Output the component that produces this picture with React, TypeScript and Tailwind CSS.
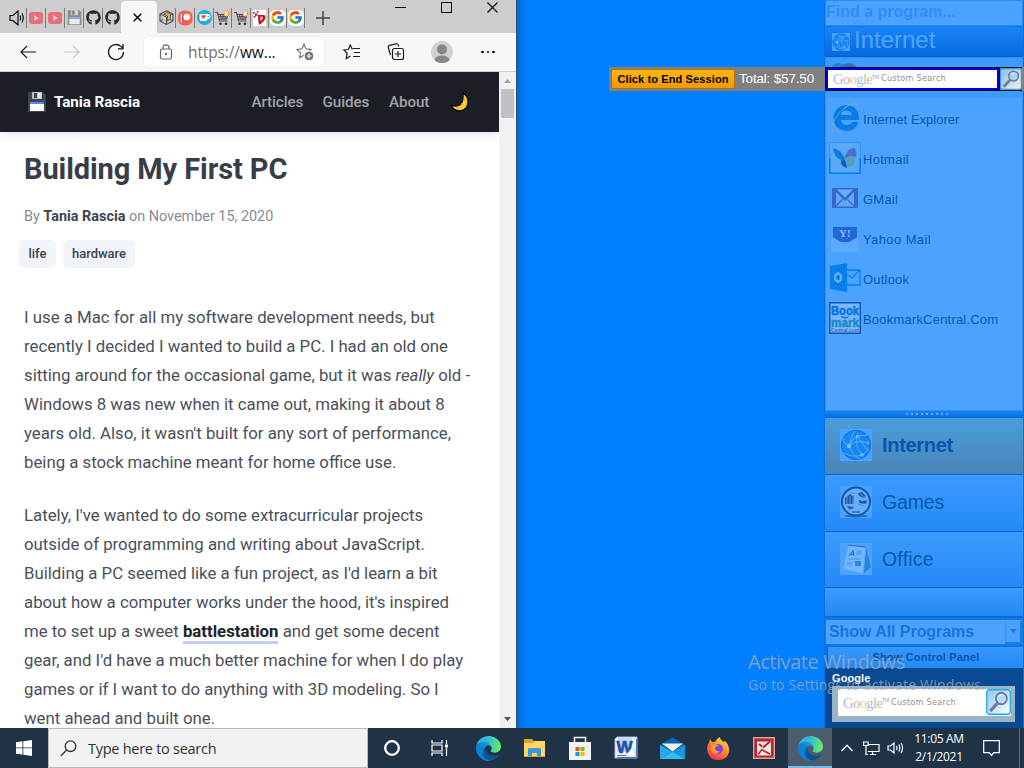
import React from "react";
import { FaGithub } from "react-icons/fa";
import { FcGoogle } from "react-icons/fc";

type Kids = { children?: React.ReactNode };

const Stroke = ({ w = 16, h = 16, sw = 1.2, className = "", children }: { w?: number; h?: number; sw?: number; className?: string } & Kids) => (
  <svg width={w} height={h} viewBox={`0 0 ${w} ${h}`} fill="none" stroke="currentColor" strokeWidth={sw} className={`shrink-0 ${className}`}>
    {children}
  </svg>
);

const YouTube = () => (
  <svg width="14" height="14" viewBox="0 0 14 14">
    <rect x="0" y="1" width="14" height="12" rx="3" fill="#e57078" />
    <path d="M5.3 4.2v5.6L10 7z" fill="#ecd5d7" />
  </svg>
);

const Floppy = ({ size = 16, faded = false }: { size?: number; faded?: boolean }) => (
  <svg width={size} height={size} viewBox="0 0 18 20" opacity={faded ? 0.6 : 1} className="shrink-0">
    <path d="M1 0h14l3 3v17H0V1z" fill={faded ? "#55606c" : "#3d4650"} />
    <path d="M4 0h10v7H4z" fill="#b6bec4" />
    <path d="M6 1h3v5H6z" fill="#3d4650" />
    <path d="M10 1h3v5h-3z" fill="#e5e9ec" />
    <path d="M2 10h14v9H2z" fill="#fff" />
    <path d="M2 10h14v2H2z" fill="#6b7df0" />
  </svg>
);

const BoxIcon = () => (
  <svg width="15" height="15" viewBox="0 0 15 15">
    <path d="M7.500 .8 14 4v7l-6.500 3.400L1 11V4z" fill="#c9cbd0" stroke="#454b5a" strokeWidth="1.100" />
    <path d="M1 4l6.500 3.200L14 4M7.500 7.200v7M1 11l3-1.500M14 11l-3-1.500" fill="none" stroke="#454b5a" />
    <path d="M4.500 4 8.500 2.500 11.500 4v5L8.500 11V6z" fill="#f4b32a" stroke="#343a4a" strokeWidth=".7" />
  </svg>
);

const Patreon = () => (
  <svg width="15" height="16" viewBox="0 0 15 16">
    <rect y=".5" width="14.500" height="15" rx="6" fill="#ff5f4b" />
    <rect x="3" y="4" width="2" height="8" fill="#3a2040" />
    <circle cx="8.800" cy="7" r="3.300" fill="#fff" />
    <rect x="2.800" y="4" width="1.500" height="8" fill="#fff" />
  </svg>
);

const Kofi = () => (
  <svg width="15" height="15" viewBox="0 0 15 15">
    <circle cx="7.500" cy="7.500" r="7.500" fill="#22aae5" />
    <path d="M2.500 4h8q3 0 3 2.400T10.500 9q-.6 2-2 2h-4q-2 0-2-2z" fill="#fff" />
    <path d="M6.500 9 4.200 6.800Q4 5 5.300 5q.8 0 1.200.7Q7 5 7.800 5 9 5.200 8.700 6.800z" fill="#ff4a45" />
    <path d="M10.700 5.400q1.500 0 1.300 1.100t-1.300 1z" fill="#22aae5" />
  </svg>
);

const Cart = () => (
  <svg width="15" height="16" viewBox="0 0 15 16">
    <path d="M0 2.500h2.500l2 8.500h8M3 4.500h10l-1.500 4.700H4.200M5.500 4.500l.8 4.500M8 4.500v4.700M10.500 4.500 10 9M3.500 6.800h9" fill="none" stroke="#4a4a4a" strokeWidth="1.100" />
    <circle cx="5.500" cy="13.800" r="1.300" fill="#333" />
    <circle cx="11" cy="13.800" r="1.300" fill="#333" />
    <path d="M9.500.5h4L15 4l-1.500 2.500h-3L8.500 4z" fill="#f59a4b" />
    <path d="M10.500 1v4.500M10.800 3.400l2-1.700M10.800 3.400l2 2" stroke="#fff" strokeWidth="1.200" fill="none" />
  </svg>
);

const RedV = () => (
  <svg width="13" height="16" viewBox="0 0 13 16">
    <path d="M0 0h13v16H0z" fill="#fff" />
    <path d="M5 5h5.500q2.500 0 1.900 3-.7 3.500-6.400 7-.9-3.500-1-10z" fill="#ca1119" />
    <path d="M7.300 6.800h2.500q-.2 3-2 4.800z" fill="#fff" />
    <path d="M0 2h1.800v1.600H0zM2 3.600h2.500v2.200H2zM.5 6h2v1.500h-2zM3.800 1h1.700v1.700H3.800z" fill="#ca1119" />
  </svg>
);

const GoogleTab = () => (
  <div className="flex h-4 w-4 shrink-0 items-center justify-center rounded-[5px] bg-white/90">
    <FcGoogle size={15} />
  </div>
);

const Tab = ({ children, className = "w-[19px]" }: { className?: string } & Kids) => (
  <div className={`flex h-[20px] shrink-0 items-center justify-center border-r border-[#7b7b7b] ${className}`}>{children}</div>
);

const StarPath = "M8 1.200l2.100 4.700 5 .5-3.800 3.400 1.100 5L8 12.200l-4.400 2.600 1.100-5L.9 6.400l5-.5z";

const Chrome = () => (
  <>
    <div className="flex h-[33px] bg-[#cdcdcd]">
      <div className="flex h-[35px] items-center">
        <Tab className="w-[27px] pl-[7px]">
          <Stroke w={16} h={16} sw={1.100} className="text-black">
            <path d="M1 5.500h3l5-4.500v14l-5-4.500H1zM11 5.500q1.200 2.500 0 5M13 3.500q2.500 4.500 0 9" />
          </Stroke>
        </Tab>
        <Tab><YouTube /></Tab>
        <Tab><YouTube /></Tab>
        <Tab><Floppy size={15} faded /></Tab>
        <Tab><FaGithub size={15} color="#24292e" /></Tab>
        <div className="flex h-[20px] w-[18px] items-center justify-center"><FaGithub size={15} color="#24292e" /></div>
      </div>
      <div className="mt-px flex w-[36px] items-center justify-center rounded-t-[4px] bg-[#f7f7f7] pr-[3px]">
        <Stroke w={9} h={9} sw={1.400} className="text-black"><path d="M.7.7l7.600 7.600M8.300.7.7 8.300" /></Stroke>
      </div>
      <div className="flex h-[35px] items-center">
        <Tab><BoxIcon /></Tab>
        <Tab><Patreon /></Tab>
        <Tab><Kofi /></Tab>
        <Tab className="w-[18px]"><Cart /></Tab>
        <Tab><Cart /></Tab>
        <Tab className="w-[18px]"><RedV /></Tab>
        <Tab className="w-[18px]"><GoogleTab /></Tab>
        <Tab className="w-[18px]"><GoogleTab /></Tab>
        <Stroke w={14} h={14} sw={1.500} className="ml-[11px] text-[#444]"><path d="M7 0v14M0 7h14" /></Stroke>
      </div>
      <div className="ml-auto flex h-[14px] items-center gap-[35px] pr-[18px] text-black">
        <Stroke w={11} h={11} sw={1}><path d="M0 5.500h11" /></Stroke>
        <Stroke w={11} h={11} sw={1}><path d="M.5.500h10v10H.5z" /></Stroke>
        <Stroke w={11} h={11} sw={1.100}><path d="M.5.500l10 10M10.500.500l-10 10" /></Stroke>
      </div>
    </div>
    <div className="flex h-[39px] items-center border-b border-[#cfcfcf] bg-[#f7f7f7] pl-[6px] text-[#1b1b1b]">
      <div className="flex w-11 justify-center"><Stroke w={16} h={14}><path d="M16 7H1M7 1 1 7l6 6" /></Stroke></div>
      <div className="flex w-11 justify-center text-[#c9c9c9]"><Stroke w={16} h={14}><path d="M0 7h15M9 1l6 6-6 6" /></Stroke></div>
      <div className="flex w-11 justify-center"><Stroke w={18} h={18} sw={1.300}><path d="M16.500 9a7.500 7.500 0 1 1-2.300-5.400L16 5.500M16 1v4.800h-5" /></Stroke></div>
      <div className="ml-[6px] flex h-[30px] w-[180px] shrink-0 items-center rounded-[4px] bg-white pl-[15px] shadow-[0_0_3px_#e2e2e2]">
        <Stroke w={14} h={16} className="text-[#666]">
          <rect x="1.500" y="5" width="11" height="10" rx="1.500" />
          <path d="M4 5V3.800a3 3 0 0 1 6 0V5" /><circle cx="7" cy="10" r=".6" fill="currentColor" />
        </Stroke>
        <span className="mt-px ml-[15px] w-[90px] whitespace-nowrap font-['Open_Sans',sans-serif] text-[15.500px] tracking-[-0.120px] text-[#707070]">
          https://<span className="text-[#111]">ww...</span>
        </span>
        <Stroke w={18} h={18} className="ml-[18px] text-[#777]">
          <path d={StarPath} /><circle cx="13" cy="13" r="4.800" fill="#707070" stroke="#fff" strokeWidth="1" />
          <path d="M13 10.500v5M10.500 13h5" stroke="#fff" />
        </Stroke>
      </div>
      <div className="ml-[5px] flex w-11 justify-center">
        <Stroke w={17} h={16}><path d="M9.300 5.500 7.300 1 5.300 5.500.8 6l3.400 3.200-1 5.300 4.300-2.500M9.800 4.500H17M11 8.500h6M10 12.500h7" /></Stroke>
      </div>
      <div className="ml-px flex w-11 justify-center">
        <Stroke w={18} h={18}>
          <path d="M3.500 12 1.300 4.500Q1 2.700 2.700 2.300L9 .8q1.800-.3 2.200 1.200l.5 1.500" />
          <rect x="5.500" y="5.500" width="11" height="11" rx="2" /><path d="M11 8v6M8 11h6" />
        </Stroke>
      </div>
      <div className="ml-[2px] flex w-11 justify-center">
        <svg width="22" height="22" viewBox="0 0 22 22">
          <circle cx="11" cy="11" r="11" fill="#d2d0ce" />
          <circle cx="11" cy="8.500" r="5" fill="#8a8583" />
          <path d="M3.300 19q1.700-4.500 7.700-4.500t7.700 4.500A11 11 0 0 1 3.300 19z" fill="#8a8583" />
        </svg>
      </div>
      <div className="ml-[2px] flex w-11 justify-center gap-[3px]">
        <i className="h-[2.500px] w-[2.500px] rounded-full bg-black" /><i className="h-[2.500px] w-[2.500px] rounded-full bg-black" /><i className="h-[2.500px] w-[2.500px] rounded-full bg-black" />
      </div>
    </div>
  </>
);

const Moon = () => (
  <svg width="20" height="20" viewBox="0 0 20 20">
    <path d="M12.800 1q5.700 3.500 5.200 9.500-.8 7.500-8 8.300-5.800.2-9-5.200 8 1.700 10.800-3Q13.700 6.500 12.800 1z" fill="#ffc83d" stroke="#0b0b0d" strokeWidth="1.300" />
    <circle cx="12" cy="12" r="1" fill="#e69a12" /><circle cx="14.500" cy="8" r=".7" fill="#e69a12" /><circle cx="8" cy="15.500" r=".8" fill="#e69a12" />
  </svg>
);

const Article = () => (
  <div className="flex h-[656px] font-[Roboto,sans-serif]">
    <div className="w-[499px] shrink-0 overflow-hidden bg-white">
      <div className="flex h-[60px] items-center bg-[#1c1e26] pl-[27px] font-medium text-[#a0a2a6] shadow-[0_3px_10px_rgba(50,50,93,0.12)]">
        <Floppy size={20} />
        <span className="ml-[7px] w-[197.500px] whitespace-nowrap text-[15.200px] font-bold tracking-[-0.050px] text-white">Tania Rascia</span>
        <span className="pt-px w-[71px] text-[15.200px] tracking-[-0.100px]">Articles</span>
        <span className="pt-px w-[66.500px] text-[15.200px] tracking-[-0.050px]">Guides</span>
        <span className="pt-px w-[60.500px] text-[15.200px] tracking-[-0.100px]">About</span>
        <Moon />
      </div>
      <h1 className="mt-[17px] ml-6 text-[29px] leading-10 font-bold tracking-[-0.090px] whitespace-nowrap text-[#373d49]">Building My First PC</h1>
      <p className="mt-[18px] ml-6 text-[14.400px] leading-5 text-[#868b93]">By <b className="font-bold text-[#3e4450]">Tania Rascia</b> on November 15, 2020</p>
      <div className="mt-[13px] ml-[19px] flex gap-[7px] text-[13px] font-medium text-[#3c434f]">
        <span className="flex h-7 w-[37px] items-center justify-center rounded-[5px] bg-[#f1f4f9]">life</span>
        <span className="flex h-7 w-[72px] items-center justify-center rounded-[5px] bg-[#f1f4f9]">hardware</span>
      </div>
      <div className="mt-[35px] ml-6 text-[16.800px] leading-[29px] whitespace-nowrap text-[#4a4f5a]">
        <p>
          I use a Mac for all my software development needs, but<br />
          recently I decided I wanted to build a PC. I had an old one<br />
          sitting around for the occasional game, but it was <em>really</em> old -<br />
          Windows 8 was new when it came out, making it about 8<br />
          years old. Also, it wasn't built for any sort of performance,<br />
          being a stock machine meant for home office use.
        </p>
        <p className="mt-6">
          Lately, I've wanted to do some extracurricular projects<br />
          outside of programming and writing about JavaScript.<br />
          Building a PC seemed like a fun project, as I'd learn a bit<br />
          about how a computer works under the hood, it's inspired<br />
          me to set up a sweet <b className="border-b-[3px] border-[#c5cdf5] font-bold text-[#20242c]">battlestation</b> and get some decent<br />
          gear, and I'd have a much better machine for when I do play<br />
          games or if I want to do anything with 3D modeling. So I<br />
          went ahead and built one.
        </p>
      </div>
    </div>
    <div className="flex w-[17px] flex-col items-center bg-[#f1f1f1]">
      <svg width="17" height="17" viewBox="0 0 17 17"><path d="M5 11h7L8.500 7z" fill="#a3a3a3" /></svg>
      <div className="h-[29px] w-[13px] bg-[#c1c1c1]" />
      <svg width="17" height="17" viewBox="0 0 17 17" className="mt-auto"><path d="M5 6h7l-3.500 4z" fill="#505050" /></svg>
    </div>
  </div>
);

const Globe = ({ size }: { size: number }) => (
  <svg width={size} height={size} viewBox="0 0 32 32" className="shrink-0">
    <path d="M0 0h32v32H0z" fill="#4ba3ff" />
    <circle cx="16" cy="16" r="15" fill="#1686f5" />
    <circle cx="16" cy="16" r="14.500" fill="none" stroke="#0c72df" />
    <g fill="none" stroke="#5cabff" strokeWidth="1">
      <path d="M9 17Q13 6 27 6M9 17Q2 13 3 9M9 17q3 9 11 13M9 17q7-7 20-3M17 7q-3 8 5 19M4 24q9 5 18 2l7-6M9 17 14 2M17 7l11 15" />
    </g>
    <g fill="#7abcff"><circle cx="9" cy="17" r="2.200" /><circle cx="22" cy="26" r="1.800" /><circle cx="17.500" cy="7" r="1.500" /><circle cx="28" cy="14" r="1.300" /></g>
  </svg>
);

const IE = () => (
  <svg width="32" height="32" viewBox="0 0 32 32">
    <path d="M30 18H12q.5 5 6 5 4 0 5-3h6.500q-2.500 9-12 9Q5 28 4.500 16 5.500 4 17.500 3 30 3.500 30 18zM12 13h11q-.5-4.500-5.500-4.500T12 13z" fill="#087be8" />
    <path d="M27 8Q30 2.500 26 2.500 17 3 9 13 1 25 5 27.500q2 1 7-1.500-7 5-9 3Q0 24 9 12 19 .5 26 1q5 .5 1 7z" fill="#6dabc4" />
  </svg>
);
const Hotmail = () => (
  <svg width="32" height="32" viewBox="0 0 32 32">
    <path d="M.5.5h31v31H.5z" fill="#57a8f8" stroke="#3591ef" /><path d="M.8 16v15.200h30.400V16" fill="none" stroke="#087ceb" strokeWidth="1.600" />
    <path d="M16 18Q13 8 4 6q1 9 8 12-1 4 5 8z" fill="#087ed8" />
    <path d="M15 18Q18 5 26 6q4 10-4 13z" fill="#4c70c9" />
    <path d="M15 18q5-6 11-3 1 11-7 10z" fill="#579fba" /><path d="M15 17q3 4 3 9-6-2-6-6z" fill="#155bba" />
  </svg>
);
const Gmail = () => (
  <svg width="32" height="32" viewBox="0 0 32 32">
    <path d="M3 6h26v20H3z" fill="#3767cb" /><path d="M8 7.500h16l-8 8z" fill="#67adf8" /><path d="M7 10v14.500h18V10l-9 9z" fill="#5da9fb" />
    <path d="M7 24l7-7M25 24l-7-7" stroke="#3b6fd2" strokeWidth="1.500" />
  </svg>
);
const Yahoo = () => (
  <svg width="32" height="32" viewBox="0 0 32 32">
    <path d="M2 10h28v20H2z" fill="#50a2f4" />
    <path d="M4 5h24v10l-8 5h-8l-8-5z" fill="#2464dc" /><path d="M2 15l14 8 14-8v15H2z" fill="#5baafb" />
    <text x="10" y="15" fontSize="11" fontWeight="700" fontFamily="Liberation Serif" fill="#8abfff">Y!</text>
  </svg>
);
const Outlook = () => (
  <svg width="32" height="32" viewBox="0 0 32 32">
    <path d="M17 8h14v15H17M17 12l6 4 8-8" fill="none" stroke="#087eed" strokeWidth="1.300" />
    <path d="M1 4l17-3v29L1 27z" fill="#087eed" /><ellipse cx="9" cy="15.500" rx="3" ry="4" fill="none" stroke="#65b1ff" strokeWidth="2.300" />
  </svg>
);
const Bookmark = () => (
  <svg width="32" height="32" viewBox="0 0 32 32" fontFamily="Liberation Sans" fontWeight="700">
    <path d="M.7.7h30.600v30.600H.7z" fill="#78b7fb" stroke="#0f56b5" strokeWidth="1.500" />
    <text x="2" y="12.500" fontSize="13.500" textLength="28" lengthAdjust="spacingAndGlyphs" stroke="#0873df" strokeWidth=".5" fill="#0873df">Book</text>
    <path d="M12 14.500q4 2.500 8 0" fill="none" stroke="#0873df" strokeWidth="1.300" />
    <text x="2" y="25" fontSize="13" textLength="28" lengthAdjust="spacingAndGlyphs" stroke="#188bc8" strokeWidth=".5" fill="#188bc8">mark</text>
    <text x="2" y="30" fontSize="5" textLength="28" lengthAdjust="spacingAndGlyphs" fill="#5165b8">Central.com</text>
  </svg>
);

const shortcuts: [string, React.ReactNode, string][] = [
  ["Internet Explorer", <IE />, "tracking-[0.020px]"],
  ["Hotmail", <Hotmail />, "tracking-[0.280px]"],
  ["GMail", <Gmail />, "tracking-[0.250px]"],
  ["Yahoo Mail", <Yahoo />, "tracking-[0.400px]"],
  ["Outlook", <Outlook />, "tracking-[0.200px]"],
  ["BookmarkCentral.Com", <Bookmark />, "tracking-[0.200px]"],
];

const GamesIcon = () => (
  <svg width="32" height="32" viewBox="0 0 32 32" className="mb-[2px]">
    <path d="M0 0h32v32H0z" fill="#4ba3ff" /><ellipse cx="16" cy="30" rx="12" ry="1.500" fill="#176fca" />
    <circle cx="16" cy="15.500" r="14" fill="#65aef8" stroke="#0c58ae" strokeWidth="2" />
    <path d="M5 12l5-4 4 3-1 7H5zM18 7l4-1 4 4-2 2-5-2zM19 14l4 1 4-1-1 4-7-1zM7 20l7 1-1 1.500-4 1z" fill="#215bb0" />
    <path d="M7 10v8M10 10v8M13 11v7M20 8l6 4M18 18l7 2M10 6l6 2" stroke="#6589cc" /><path d="M12 25h8v2h-8z" fill="#5373c4" />
  </svg>
);
const OfficeIcon = () => (
  <svg width="32" height="32" viewBox="0 0 32 32" className="mb-[2px]">
    <path d="M0 0h32v32H0z" fill="#4ba3ff" /><path d="M26 4l5 20-8 7z" fill="#2c85d3" />
    <path d="M8 2l18 2-3 27L3 26z" fill="#71b7ff" stroke="#55a5f4" /><path d="M8 2l18 2" stroke="#1a70d0" />
    <path d="M9 13l4-5 1 5M10.500 11.500h3" fill="none" stroke="#1c78df" strokeWidth="1.200" />
    <path d="M16 9h6M16 11h6M8 16h13M7 20h6M7 22h5" stroke="#4796ea" /><path d="M15 18h6v5h-6z" fill="#258ae5" />
  </svg>
);

const Magnifier = ({ w = 24, h = 24 }: { w?: number; h?: number }) => (
  <svg width={w} height={h} viewBox="0 0 24 24" preserveAspectRatio="none" className="shrink-0">
    <defs><linearGradient id="mag" x2="1" y2="1"><stop stopColor="#8fc8f8" /><stop offset=".5" stopColor="#c5e1fa" /><stop offset="1" stopColor="#fff" /></linearGradient></defs>
    <rect x=".7" y=".7" width="22.600" height="22.600" rx="2.500" fill="url(#mag)" stroke="#29a9df" strokeWidth="1.300" />
    <path d="M4 20.500l7-7.500" stroke="#6c7c93" strokeWidth="3" /><circle cx="14.800" cy="8.800" r="5.300" fill="#b5daff" stroke="#687c99" strokeWidth="1.700" />
    <path d="M12 7q2-2 4-1.500" stroke="#eff8ff" fill="none" />
  </svg>
);

const GoogleCustom = () => (
  <span className="flex items-center whitespace-nowrap">
    <span className="w-[39px] font-['Liberation_Serif',serif] text-[14.500px] leading-4 tracking-[-0.550px] text-[#a9bce2]">
      G<span className="text-[#e3aaa5]">o</span><span className="text-[#dccf92]">o</span>g<span className="text-[#a5cba5]">l</span><span className="text-[#e3aaa5]">e</span>
    </span>
    <span className="mb-1 w-[7px] text-[5px] leading-none text-[#999]">TM</span>
    <span className="ml-[2px] font-['DejaVu_Sans_Condensed','DejaVu_Sans',sans-serif] text-[9px] tracking-[0.280px] text-[#909090]">Custom Search</span>
  </span>
);

const Sidebar = () => (
  <div className="flex w-[200px] shrink-0 flex-col border-x border-[#0b6fe0] bg-[#0b76ec] font-['Liberation_Sans',sans-serif]">
    <div className="h-[26px] border border-[#2c8cf3] bg-[#4ba3ff] text-[16px] leading-[22px] font-bold text-[#2c8df4]">Find a program...</div>
    <div className="mt-px flex h-[30px] items-center border-b border-[#075dc4] bg-linear-to-b from-[#1983f6] to-[#066ae0] pl-[7px] text-[24px] leading-6 text-[#51a5ff]">
      <Globe size={18} /><span className="mb-[4px] ml-[4px]">Internet</span>
    </div>
    <div className="h-[354px] shrink-0 border border-[#3390f1] bg-[#4ba3ff]">
      <div className="h-[40px] bg-[#3c9bff] pt-[4px] pl-[4px]">
        <svg width="34" height="16" viewBox="0 0 34 16"><circle cx="8" cy="7" r="6" fill="#1383ed" /><path d="M11 3q12-5 17 4v4H14z" fill="#326ace" /><path d="M3 9q3-6 9-3" stroke="#5ab3ff" fill="none" /></svg>
      </div>
      {shortcuts.map(([name, icon, tracking]) => (
        <div key={name} className="flex h-10 items-center pl-[3px] text-[13px] text-[#0757af]">
          {icon}<span className={`ml-[2px] pt-[3px] ${tracking}`}>{name}</span>
        </div>
      ))}
    </div>
    <div className="flex h-[7px] shrink-0 items-center justify-center gap-[3px] bg-linear-to-b from-[#1983f6] to-[#066ae0] pl-[5px]">
      {Array.from({ length: 9 }, (_, i) => <i key={i} className="mb-[2px] h-[2px] w-[2px] bg-[#63b0ff]" />)}
    </div>
    <div className="flex h-[57px] items-center border-b border-[#0866da] bg-linear-to-b from-[#4a9ddb] to-[#4a85b8] pb-[2px] pl-[15px] text-[20px] font-bold text-[#0757af]">
      <Globe size={32} /><span className="ml-[10px] tracking-[-0.300px]">Internet</span>
    </div>
    <div className="flex h-[57px] items-center border-b border-[#0866da] bg-linear-to-b from-[#3b9bff] to-[#238af6] pl-[15px] text-[19.500px] text-[#0757af]">
      <GamesIcon /><span className="ml-[10px] tracking-[-0.150px]">Games</span>
    </div>
    <div className="flex h-[56px] items-center border-b border-[#0866da] bg-linear-to-b from-[#3b9bff] to-[#238af6] pl-[15px] text-[19.500px] text-[#0757af]">
      <OfficeIcon /><span className="ml-[10px] tracking-[0.200px]">Office</span>
    </div>
    <div className="h-[29px] border-b border-[#0866da] bg-linear-to-b from-[#3b9bff] to-[#238af6]" />
    <div className="mt-[2px] flex h-[26px] items-center justify-between border border-[#197bdf] bg-[#4ba3ff] pl-[3px] text-[16px] font-bold text-[#1875d8]">
      <span className="whitespace-nowrap tracking-[-0.060px]">Show All Programs</span>
      <span className="flex h-[23px] w-[17px] items-center justify-center border-r-2 border-b-2 border-l border-[#1d7ddf] border-l-[#3693f5] bg-[#49a1fd]"><svg width="7" height="4" viewBox="0 0 7 4"><path d="M0 0h7L3.500 4z" fill="#1875d8" /></svg></span>
    </div>
    <div className="mt-[2px] ml-[2px] flex h-[21px] items-center justify-center border-l border-[#0868d8] bg-linear-to-b from-[#3697fc] to-[#238af6] pl-px text-[11px] font-bold tracking-[0.180px] text-[#0757af]">Show Control Panel</div>
    <div className="flex-1 bg-[#084a93] pt-[3px] pl-[7px]">
      <div className="mb-px text-[11px] leading-[14px] font-bold tracking-[0.100px] text-white">Google</div>
      <div className="flex h-[36px] w-[183px] border-[6px] border-t-[3px] border-r-[4px] border-[#98b4c6] bg-white">
        <div className="flex flex-1 items-center pl-[5px]"><GoogleCustom /></div>
        <Magnifier w={25} h={26} />
      </div>
    </div>
  </div>
);

const Edge = ({ id }: { id: string }) => (
  <svg width="25" height="25" viewBox="0 0 256 256">
    <defs>
      <linearGradient id={`${id}a`} x1="63" y1="178" x2="241" y2="178" gradientUnits="userSpaceOnUse"><stop stopColor="#0c59a4" /><stop offset="1" stopColor="#114a8b" /></linearGradient>
      <linearGradient id={`${id}b`} x1="157" y1="85" x2="46" y2="220" gradientUnits="userSpaceOnUse"><stop stopColor="#1b9de2" /><stop offset=".5" stopColor="#0b84d2" /><stop offset="1" stopColor="#0883d9" /></linearGradient>
      <linearGradient id={`${id}c`} x1="10" y1="50" x2="250" y2="110" gradientUnits="userSpaceOnUse"><stop stopColor="#35a9e8" /><stop offset=".5" stopColor="#35c1c8" /><stop offset="1" stopColor="#66eb6e" /></linearGradient>
    </defs>
    <g transform="translate(-4.63 -4.92)">
      <path fill={`url(#${id}a)`} d="M235.680 195.460a93.730 93.730 0 01-10.540 4.710 101.870 101.870 0 01-35.900 6.460c-47.320 0-88.540-32.550-88.540-74.320A31.480 31.480 0 01117.130 105c-42.800 1.800-53.800 46.400-53.800 72.530 0 73.880 68.090 81.370 82.760 81.370 7.910 0 19.840-2.300 27-4.560l1.310-.44a128.340 128.340 0 0066.600-52.800 4 4 0 00-5.320-5.640z" />
      <path fill={`url(#${id}b)`} d="M110.340 246.340A79.200 79.200 0 0187.600 225a80.720 80.720 0 0129.530-120c3.120-1.470 8.450-4.130 15.540-4a32.350 32.350 0 0125.690 13 31.880 31.880 0 016.360 18.660c0-.21 24.460-79.600-80-79.600-43.900 0-80 41.660-80 78.210a130.150 130.150 0 0012.110 56 128 128 0 00156.380 67.110 75.550 75.550 0 01-62.780-8z" />
      <path fill={`url(#${id}c)`} d="M156.940 153.780c-.81 1.050-3.300 2.500-3.300 5.660 0 2.610 1.700 5.120 4.720 7.230 14.380 10 41.490 8.680 41.560 8.680a59.560 59.560 0 0030.270-8.350 61.380 61.380 0 0030.430-52.880c.26-22.410-8-37.310-11.340-43.910C228.090 28.760 182.350 4.920 132.610 4.920a128 128 0 00-128 126.200c.48-36.540 36.800-66.050 80-66.050 3.500 0 23.460.34 42 10.070 16.340 8.580 24.900 18.940 30.850 29.210 6.180 10.670 7.280 24.150 7.280 29.520s-2.740 13.330-7.800 19.910z" />
    </g>
  </svg>
);

const Folder = () => (
  <svg width="23" height="20" viewBox="0 0 23 20"><path d="M1 1h8l2 2h11v16H1z" fill="#e0a316" /><path d="M1 5h9l2-2h10v15H1z" fill="#ffd768" /><path d="M5 18v-7l1-1h11l1 1v7h-4v-3H9v3z" fill="#3c97dc" /></svg>
);
const Store = () => (
  <svg width="24" height="25" viewBox="0 0 24 25"><path d="M6.500 7V1.500h11V7" fill="none" stroke="#f1f1f1" strokeWidth="1.600" /><path d="M1 6h22v18H1z" fill="#f1f1f1" /><path d="M7.500 11h4v4h-4z" fill="#f25022" /><path d="M12.500 11h4v4h-4z" fill="#7fba00" /><path d="M7.500 16h4v4h-4z" fill="#00a4ef" /><path d="M12.500 16h4v4h-4z" fill="#ffb900" /></svg>
);
const Word = () => (
  <svg width="24" height="24" viewBox="0 0 24 24"><path d="M3 1h20v21H1V3z" fill="#f2f6fc" stroke="#a9bcdc" /><path d="M4 2h14v14H3z" fill="#c4d9f3" /><text x="2.500" y="17" fontSize="17" fontWeight="700" fontFamily="Liberation Sans" textLength="16" lengthAdjust="spacingAndGlyphs" fill="#1e52a4" stroke="#1e52a4" strokeWidth=".6">W</text><path d="M12 19l6-7 4 5-1 4h-6z" fill="#fff" stroke="#9db3d6" strokeWidth=".6" /><path d="M3 19.500h9M22.500 3v18.500H3" stroke="#4d74b5" fill="none" /></svg>
);
const Mail = () => (
  <svg width="25" height="24" viewBox="0 0 25 24"><path d="M0 9 12.500 1 25 9v14H0z" fill="#0b63ad" /><path d="M2 7.500h21l-10.500 8z" fill="#f1f1f1" /><path d="M0 9l12.500 7L0 23z" fill="#27a8e8" /><path d="M25 9v14H0z" fill="#31bdf2" /><path d="M25 9v14l-12.500-7z" fill="#1694dd" /></svg>
);
const Firefox = () => (
  <svg width="24" height="24" viewBox="0 0 24 24">
    <defs><linearGradient id="ff" x1=".8" x2=".2" y2="1"><stop stopColor="#ffe53c" /><stop offset=".5" stopColor="#ff8425" /><stop offset="1" stopColor="#f02764" /></linearGradient></defs>
    <path d="M4 3l2 3 3-.2Q11 2 14 1q0 3 4 5l1-1q5 5 4 11-2 8-11 8T1 14Q1 9 3 7z" fill="url(#ff)" />
    <circle cx="12" cy="13" r="5" fill="#7648dc" /><path d="M6 9q4-2 7 1-4 0-4 3 1 3 5 2-3 4-7 2-3-3-1-8z" fill="#ff9b2c" />
  </svg>
);
const RedApp = () => (
  <svg width="22" height="22" viewBox="0 0 22 22"><path d="M.7.7h20.600v20.600H.7z" fill="#b3262c" stroke="#e0a09c" strokeWidth="1.400" /><path d="M4 4.500h14v14H4z" fill="#f1e2e0" /><path d="M6 7l3 2.500M10 10.500l7-6" stroke="#a92a30" strokeWidth="2" fill="none" /><path d="M5 17.500l4-5 3 2 5 2.500" stroke="#a92a30" strokeWidth="1.500" fill="none" /></svg>
);

const TaskCell = ({ children }: Kids) => <div className="flex h-10 w-[46px] shrink-0 items-center justify-center">{children}</div>;

const Taskbar = () => (
  <div className="flex h-10 bg-[#1f3246] font-['Open_Sans',sans-serif] text-white">
    <div className="flex w-12 items-center justify-center">
      <svg width="16" height="16" viewBox="0 0 16 16" fill="#fff"><path d="M0 2.200 6.500 1.300v6.200H0zM7.300 1.200 16 0v7.500H7.300zM0 8.300h6.500v6.300L0 13.700zM7.300 8.300H16V16l-8.700-1.200z" /></svg>
    </div>
    <div className="flex w-[320px] items-center border border-[#bcbcbc] bg-[#f2f2f2] pl-[11px] text-[#333]">
      <Stroke w={17} h={17} sw={1.300}><circle cx="10.500" cy="6.200" r="5.300" /><path d="M6.600 10 .8 16" /></Stroke>
      <span className="mt-px ml-[11px] text-[14.500px] tracking-[-0.270px]">Type here to search</span>
    </div>
    <div className="flex w-12 items-center justify-center"><Stroke w={18} h={18} sw={2.300}><circle cx="9" cy="9" r="6.800" /></Stroke></div>
    <div className="mr-px flex w-12 items-center justify-center">
      <Stroke w={18} h={16}><path d="M1 0v3h10V0M1 16v-3h10v3M1 5h10v6H1zM15.500 0v4M15.500 8v8" /><path d="M14 4.500h3v3h-3z" fill="currentColor" stroke="none" /></Stroke>
    </div>
    <TaskCell><Edge id="e" /></TaskCell>
    <TaskCell><Folder /></TaskCell>
    <TaskCell><Store /></TaskCell>
    <TaskCell><Word /></TaskCell>
    <TaskCell><Mail /></TaskCell>
    <TaskCell><Firefox /></TaskCell>
    <TaskCell><RedApp /></TaskCell>
    <div className="ml-px flex w-11 shrink-0 items-center justify-center border-b-2 border-[#76b9ed] bg-[#4c5c6d] pt-[3px]"><Edge id="f" /></div>
    <Stroke w={12} h={8} sw={1.300} className="mt-4 ml-[9px]"><path d="M.5 7 6 1.200 11.500 7" /></Stroke>
    <Stroke w={17} h={15} className="mt-[13px] ml-[10px]"><path d="M5 3.500h11v7H5M3 5v8.500h2M9.500 10.500v3M7 13.500h6M.6 1h4.500v3.500H.6z" /></Stroke>
    <Stroke w={17} h={14} className="mt-[13px] ml-[7px]"><path d="M1 5h2.500L7 2v10L3.500 9H1zM9.500 5q1 2 0 4M11.800 3.500q2 3.500 0 7M14 2q3.200 5 0 10" /></Stroke>
    <div className="ml-[6px] flex w-[58px] flex-col pt-[2px] text-center text-[12px] leading-[18px] tracking-[-0.320px] whitespace-nowrap"><span>11:05 AM</span><span>2/1/2021</span></div>
    <Stroke w={17} h={17} className="mt-[12px] ml-[15px]"><path d="M.7.7h15.600v12h-5.500L8.500 15.500 6.200 12.700H.7z" /></Stroke>
    <div className="ml-[19px] w-px bg-[#5f6e7d]" />
  </div>
);

export default function App() {
  return (
    <div className="relative h-[768px] w-[1024px] overflow-hidden bg-[#007fff]">
      <div className="flex h-[728px]">
        <div className="w-[517px] shrink-0 overflow-hidden border-r border-[#26527d] bg-[#f7f7f7]"><Chrome /><Article /></div>
        <div className="w-[10px] bg-linear-to-r from-[#0068d3] to-[#007fff]" />
        <div className="flex-1" />
        <Sidebar />
      </div>
      <Taskbar />
      <div className="absolute top-[67px] left-[609px] flex h-[24px] w-[415px] items-center bg-[#808080] pl-[2px] font-['Liberation_Sans',sans-serif]">
        <div className="flex h-[20px] w-[124px] items-center justify-center rounded-[2px] border border-[#b57200] bg-linear-to-b from-[#ffb510] to-[#ee9a00] text-[11px] font-bold tracking-[0.120px] whitespace-nowrap text-black">Click to End Session</div>
        <span className="ml-[4px] w-[86px] pt-px text-[13.500px] tracking-[-0.180px] text-white">Total: $57.50</span>
        <div className="flex h-[24px] w-[175px] items-center border-[3px] border-[#0000e6] bg-white pl-[5px] outline outline-1 -outline-offset-1 outline-black"><GoogleCustom /></div>
        <div className="flex h-[24px] items-center border-y border-black opacity-90"><Magnifier w={22} h={22} /></div>
      </div>
      <div className="pointer-events-none absolute top-[648px] left-[748px] whitespace-nowrap font-['Open_Sans',sans-serif] text-[#a7adb2]/75">
        <div className="text-[20px] leading-[28px] tracking-[-0.450px]">Activate Windows</div>
        <div className="text-[14px] leading-[18px] tracking-[0.220px]">Go to Settings to activate Windows.</div>
      </div>
    </div>
  );
}
